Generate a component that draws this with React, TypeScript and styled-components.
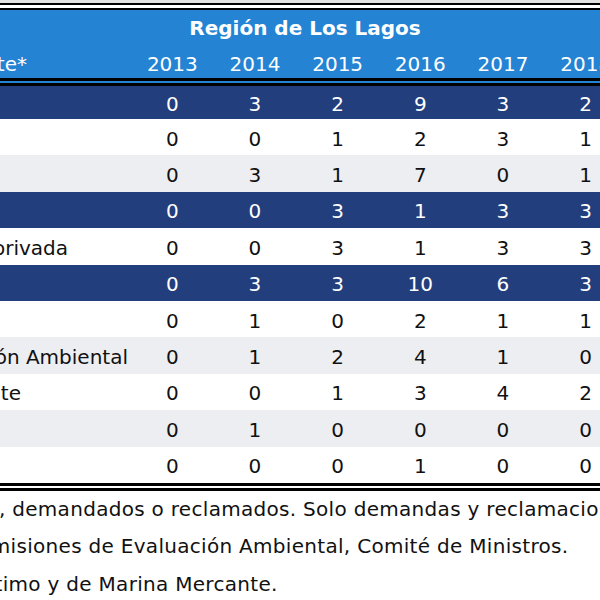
import { createGlobalStyle } from 'styled-components';
import styled from 'styled-components';

const GlobalStyle = createGlobalStyle`
  html, body {
    margin: 0;
    padding: 0;
    background: #fff;
  }
  body {
    font-family: "DejaVu Sans", Verdana, sans-serif;
  }
`;

const Page = styled.div`
  width: 600px;
  height: 600px;
  overflow: hidden;
  box-sizing: border-box;
  border-top: 3px solid #e2e2e2;
  background: #fff;
`;

const Table = styled.table`
  width: 627px;
  table-layout: fixed;
  border-collapse: separate;
  border-spacing: 0;
  border-top: 7px double #000;
  border-bottom: 8px double #000;
  font-size: 20px;
  color: #111;
`;

const TitleRow = styled.tr`
  height: 36px;
  background: #2483d3;
`;

const TitleCell = styled.th`
  padding: 0 17px 0 0;
  color: #fff;
  font-weight: bold;
  text-align: center;
`;

const YearRow = styled.tr`
  height: 40px;
  background: #2483d3;
`;

const YearCell = styled.th`
  padding: 3px 0 0;
  color: #fff;
  font-weight: normal;
  text-align: center;
  border-bottom: 8px double #000;
`;

const tones = {
  navy: { bg: '#233e7c', fg: '#fff' },
  white: { bg: '#fff', fg: '#111' },
  grey: { bg: '#edeef2', fg: '#111' },
};

type Tone = keyof typeof tones;

const Row = styled.tr<{ $tone: Tone }>`
  height: 36.4px;
  background: ${(p) => tones[p.$tone].bg};
  color: ${(p) => tones[p.$tone].fg};
  &:first-child {
    height: 33px;
  }
`;

const Cell = styled.td`
  padding: 3px 0 0;
  text-align: center;
  white-space: nowrap;
`;

const LabelCell = styled.td`
  padding: 3px 0 0;
  overflow: hidden;
`;

// the label column is cut at the left edge; text is anchored on its end
const Label = styled.div<{ $gap: number }>`
  display: flex;
  justify-content: flex-end;
  padding-right: ${(p) => p.$gap}px;
  white-space: nowrap;
  overflow: hidden;
  > span {
    flex-shrink: 0;
  }
`;

const Notes = styled.div`
  font-size: 20px;
  line-height: 37.5px;
  letter-spacing: 0.3px;
  color: #111;
`;

const Note = styled.p<{ $indent: number }>`
  margin: 0;
  white-space: nowrap;
  text-indent: ${(p) => p.$indent}px;
`;

const years = [2013, 2014, 2015, 2016, 2017, 2018];

const rows: { label?: string; gap?: number; tone: Tone; values: number[] }[] = [
  { tone: 'navy', values: [0, 3, 2, 9, 3, 2] },
  { tone: 'white', values: [0, 0, 1, 2, 3, 1] },
  { tone: 'grey', values: [0, 3, 1, 7, 0, 1] },
  { tone: 'navy', values: [0, 0, 3, 1, 3, 3] },
  { label: 'Persona natural o jurídica privada', gap: 63, tone: 'white', values: [0, 0, 3, 1, 3, 3] },
  { tone: 'navy', values: [0, 3, 3, 10, 6, 3] },
  { tone: 'white', values: [0, 1, 0, 2, 1, 1] },
  { label: 'Servicio de Evaluación Ambiental', gap: 3, tone: 'grey', values: [0, 1, 2, 4, 1, 0] },
  { label: 'Ministerio del Medio Ambiente', gap: 110, tone: 'white', values: [0, 0, 1, 3, 4, 2] },
  { tone: 'grey', values: [0, 1, 0, 0, 0, 0] },
  { tone: 'white', values: [0, 0, 0, 1, 0, 0] },
];

export default function App() {
  return (
    <Page>
      <GlobalStyle />
      <Table>
        <colgroup>
          <col style={{ width: 131 }} />
          {years.map((y) => (
            <col key={y} style={{ width: 82.67 }} />
          ))}
        </colgroup>
        <thead>
          <TitleRow>
            <TitleCell colSpan={7}>Región de Los Lagos</TitleCell>
          </TitleRow>
          <YearRow>
            <YearCell>
              <Label $gap={104}>
                <span>Parte*</span>
              </Label>
            </YearCell>
            {years.map((y) => (
              <YearCell key={y}>{y}</YearCell>
            ))}
          </YearRow>
        </thead>
        <tbody>
          {rows.map((r, i) => (
            <Row key={i} $tone={r.tone}>
              <LabelCell>
                {r.label && (
                  <Label $gap={r.gap ?? 0}>
                    <span>{r.label}</span>
                  </Label>
                )}
              </LabelCell>
              {r.values.map((v, j) => (
                <Cell key={j}>{v}</Cell>
              ))}
            </Row>
          ))}
        </tbody>
      </Table>
      <Notes>
        <Note $indent={-142}>demandantes, demandados o reclamados. Solo demandas y reclamaciones.</Note>
        <Note $indent={-36}>Comisiones de Evaluación Ambiental, Comité de Ministros.</Note>
        <Note $indent={-50}>Marítimo y de Marina Mercante.</Note>
      </Notes>
    </Page>
  );
}
